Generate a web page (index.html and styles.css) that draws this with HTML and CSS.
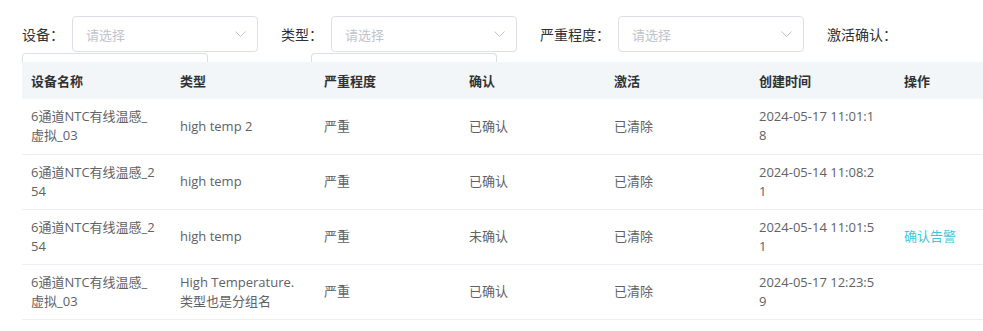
FILE: index.html
```html
<!DOCTYPE html>
<html lang="zh-CN">
<head>
<meta charset="utf-8">
<title>告警列表</title>
<link rel="stylesheet" href="styles.css">
</head>
<body>
<div class="page">
  <div class="filters">
    <div class="filter-item">
      <span class="label">设备：</span>
      <div class="select"><span class="placeholder">请选择</span><svg class="arrow" width="11" height="6" viewBox="0 0 11 6"><polyline points="0.5,0.5 5.5,5.5 10.5,0.5" fill="none" stroke="#c0c4cc" stroke-width="1"/></svg></div>
    </div>
    <div class="filter-item">
      <span class="label">类型：</span>
      <div class="select"><span class="placeholder">请选择</span><svg class="arrow" width="11" height="6" viewBox="0 0 11 6"><polyline points="0.5,0.5 5.5,5.5 10.5,0.5" fill="none" stroke="#c0c4cc" stroke-width="1"/></svg></div>
    </div>
    <div class="filter-item">
      <span class="label">严重程度：</span>
      <div class="select"><span class="placeholder">请选择</span><svg class="arrow" width="11" height="6" viewBox="0 0 11 6"><polyline points="0.5,0.5 5.5,5.5 10.5,0.5" fill="none" stroke="#c0c4cc" stroke-width="1"/></svg></div>
    </div>
    <div class="filter-item">
      <span class="label">激活确认：</span>
    </div>
  </div>
  <div class="filters-row2">
    <div class="stub"></div>
    <div class="stub"></div>
  </div>
  <table class="grid">
    <colgroup>
      <col class="c1"><col class="c2"><col class="c3"><col class="c3"><col class="c3"><col class="c3"><col>
    </colgroup>
    <thead>
      <tr>
        <th>设备名称</th><th>类型</th><th>严重程度</th><th>确认</th><th>激活</th><th>创建时间</th><th>操作</th>
      </tr>
    </thead>
    <tbody>
      <tr>
        <td>6通道NTC有线温感_<br>虚拟_03</td><td>high temp 2</td><td>严重</td><td>已确认</td><td>已清除</td><td>2024-05-17 11:01:1<br>8</td><td></td>
      </tr>
      <tr>
        <td>6通道NTC有线温感_2<br>54</td><td>high temp</td><td>严重</td><td>已确认</td><td>已清除</td><td>2024-05-14 11:08:2<br>1</td><td></td>
      </tr>
      <tr>
        <td>6通道NTC有线温感_2<br>54</td><td>high temp</td><td>严重</td><td>未确认</td><td>已清除</td><td>2024-05-14 11:01:5<br>1</td><td><a class="link">确认告警</a></td>
      </tr>
      <tr>
        <td>6通道NTC有线温感_<br>虚拟_03</td><td>High Temperature.<br>类型也是分组名</td><td>严重</td><td>已确认</td><td>已清除</td><td>2024-05-17 12:23:5<br>9</td><td></td>
      </tr>
    </tbody>
  </table>
</div>
</body>
</html>
```

FILE: styles.css
```css
html, body {
  margin: 0;
  padding: 0;
  background: #ffffff;
  overflow: hidden;
}

.page {
  font-family: "Open Sans", "Noto Sans CJK SC", sans-serif;
  color: #606266;
  padding-top: 16px;
}

.filters {
  display: flex;
  align-items: center;
  padding-left: 22px;
  gap: 23px;
}

.filter-item {
  display: flex;
  align-items: center;
}

.label {
  font-size: 14px;
  color: #303133;
  margin-right: 8px;
  white-space: nowrap;
}

.select {
  box-sizing: border-box;
  width: 186px;
  height: 36px;
  border: 1px solid #dcdfe6;
  border-radius: 4px;
  display: flex;
  align-items: center;
  justify-content: space-between;
  padding: 0 11px 0 13px;
}

.placeholder {
  font-size: 13px;
  color: #c0c4cc;
}

.arrow {
  display: block;
}

.filters-row2 {
  display: flex;
  padding-left: 22px;
  gap: 103px;
  margin-top: 1px;
}

.stub {
  box-sizing: border-box;
  width: 186px;
  height: 9px;
  border: 1px solid #dcdfe6;
  border-bottom: none;
  border-radius: 4px 4px 0 0;
}

.grid {
  margin-left: 22px;
  width: 980px;
  table-layout: fixed;
  border-collapse: collapse;
  font-size: 13px;
}

.grid col.c1 { width: 149px; }
.grid col.c2 { width: 144px; }
.grid col.c3 { width: 145px; }

.grid th {
  background: #f2f6f9;
  height: 37px;
  padding: 0 9px;
  text-align: left;
  font-weight: bold;
  color: #303133;
  white-space: nowrap;
}

.grid td {
  height: 55px;
  box-sizing: border-box;
  padding: 0 9px;
  line-height: 19px;
  border-bottom: 1px solid #ebeef5;
  vertical-align: middle;
  white-space: nowrap;
}

.link {
  color: #3ec6d6;
  font-size: 13px;
}
```
